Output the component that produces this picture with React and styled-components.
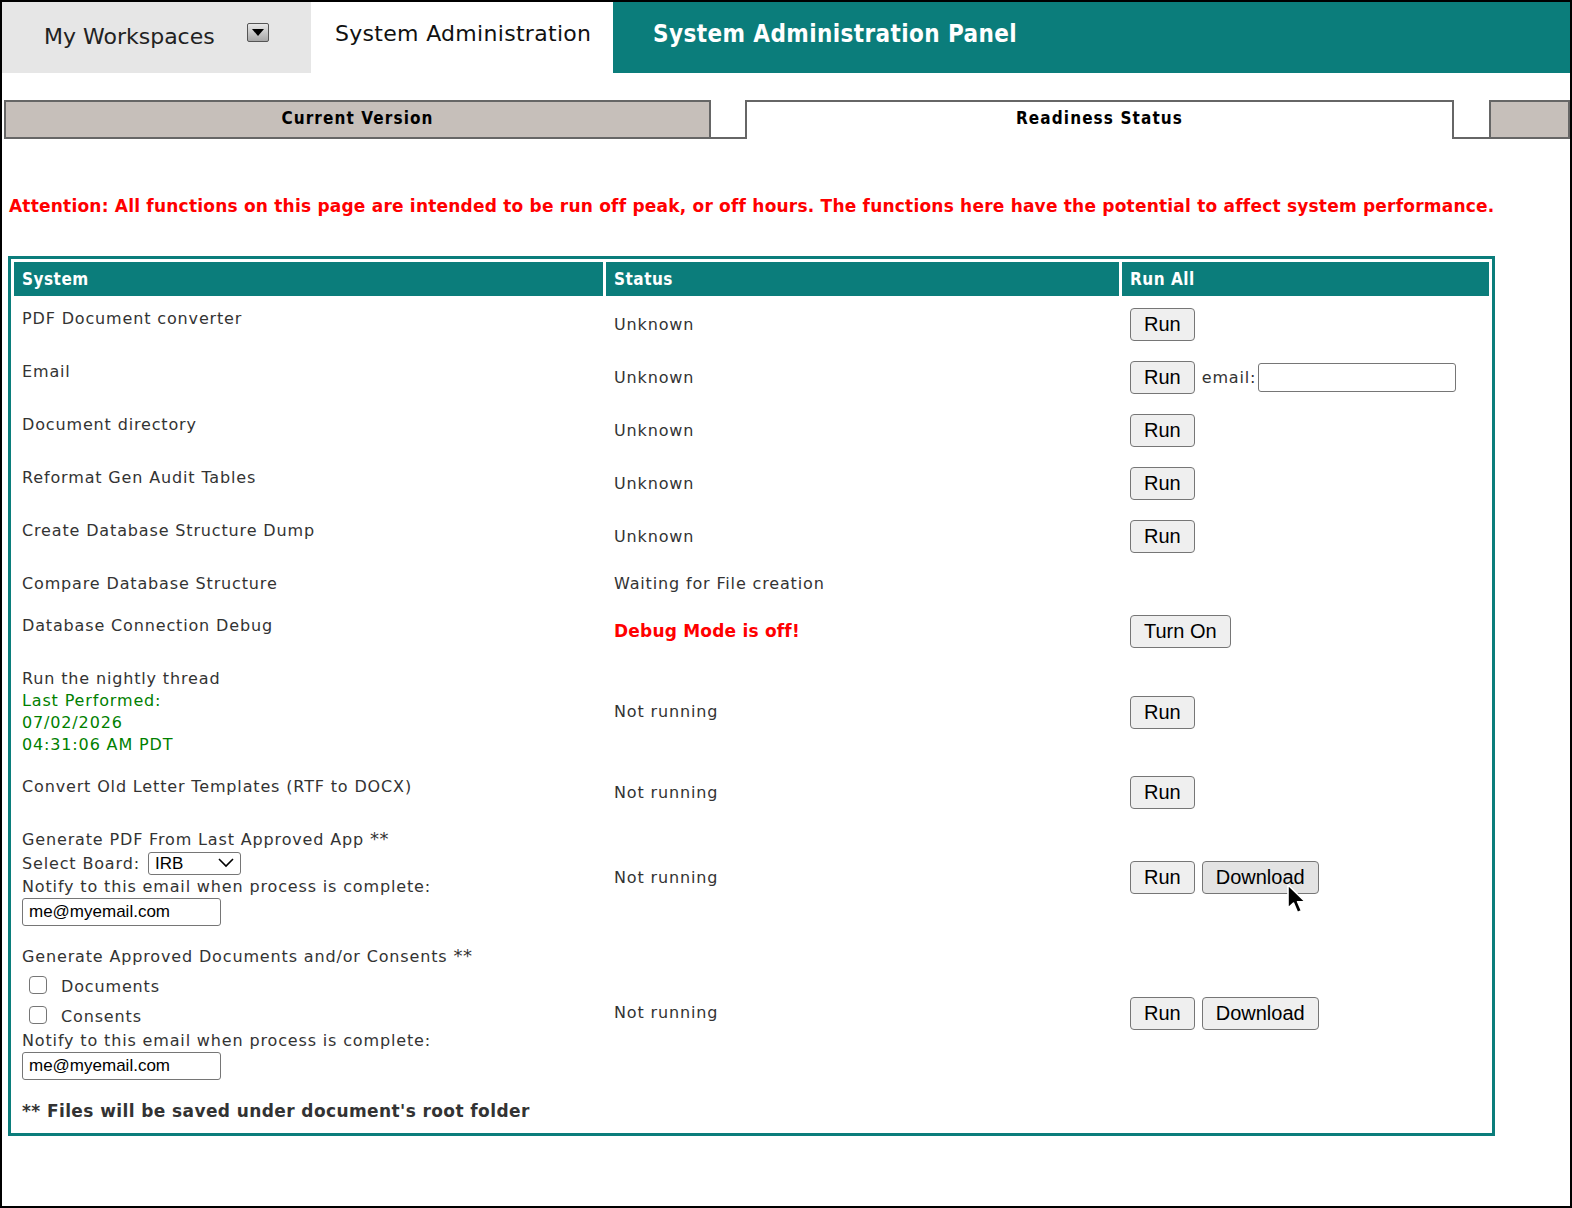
import styled, { createGlobalStyle } from "styled-components";

const TEAL = "#0b7d7b";
const BORDER = "#666";

const GlobalStyle = createGlobalStyle`
  html, body {
    margin: 0;
    padding: 0;
  }
  body {
    box-sizing: border-box;
    min-height: 1208px;
    border: 2px solid #000;
    background: #fff;
    color: #333;
    font-family: "DejaVu Sans", Verdana, sans-serif;
  }
`;

const Page = styled.div`
  display: flex;
  flex-direction: column;
`;

const TopBar = styled.div`
  display: flex;
  height: 71px;
`;

const WorkspaceTab = styled.div`
  width: 309px;
  background: #e6e6e6;
  display: flex;
  align-items: flex-start;
  padding: 22px 0 0 42px;
  box-sizing: border-box;
  gap: 32px;
  font-size: 22px;
  color: #222;
`;

const DropIcon = styled.span`
  display: inline-flex;
  align-items: center;
  justify-content: center;
  width: 22px;
  height: 19px;
  margin-top: -1px;
  border: 1px solid #555;
  border-radius: 2px;
  background: linear-gradient(#e8e8e8, #a8a8a8);
  box-sizing: border-box;
`;

const AdminTab = styled.div`
  width: 302px;
  background: #fff;
  padding: 19px 0 0 24px;
  box-sizing: border-box;
  font-size: 22px;
  letter-spacing: 0.3px;
  color: #111;
`;

const PanelTitle = styled.div`
  flex: 1;
  background: ${TEAL};
  color: #fff;
  padding: 18px 0 0 40px;
  font-family: "DejaVu Sans Condensed", "DejaVu Sans", sans-serif;
  font-weight: bold;
  font-size: 24px;
  letter-spacing: 0.4px;
`;

const SubTabs = styled.div`
  display: flex;
  height: 39px;
  margin-top: 27px;
  padding-left: 2px;
`;

const SubTab = styled.div`
  width: ${(p) => p.$width};
  flex: ${(p) => (p.$grow ? 1 : "none")};
  box-sizing: border-box;
  border: 2px solid ${BORDER};
  border-bottom: ${(p) => (p.$active ? "none" : `2px solid ${BORDER}`)};
  background: ${(p) => (p.$active ? "#fff" : "#c6bfba")};
  display: flex;
  align-items: center;
  justify-content: center;
  padding-bottom: ${(p) => (p.$active ? "5px" : "3px")};
  font-family: "DejaVu Sans Condensed", "DejaVu Sans", sans-serif;
  font-weight: bold;
  font-size: 17px;
  letter-spacing: 1.1px;
  color: #000;
`;

const TabGap = styled.div`
  width: ${(p) => p.$width};
  border-bottom: 2px solid ${BORDER};
  box-sizing: border-box;
`;

const Attention = styled.p`
  margin: 56px 0 0 7px;
  line-height: 22px;
  color: #f00;
  font-weight: bold;
  font-size: 17px;
  letter-spacing: 0.21px;
  white-space: nowrap;
`;

const Table = styled.table`
  margin: 39px 0 0 6px;
  width: 1487px;
  border: 3px solid ${TEAL};
  border-collapse: separate;
  border-spacing: 3px;
`;

const HeadCell = styled.th`
  width: ${(p) => p.$width};
  height: 34px;
  padding: 0 8px;
  box-sizing: border-box;
  background: ${TEAL};
  color: #fff;
  text-align: left;
  font-family: "DejaVu Sans Condensed", "DejaVu Sans", sans-serif;
  font-weight: bold;
  font-size: 17px;
  letter-spacing: 0.5px;
`;

const Cell = styled.td`
  padding: 9px 8px 8px;
  vertical-align: ${(p) => (p.$top ? "top" : "middle")};
  font-size: 16px;
  line-height: 22px;
  letter-spacing: 0.85px;
  color: #333;
`;

const Green = styled.div`
  color: #008000;
`;

const Stars = styled.span`
  font-size: 18px;
  line-height: 1;
  letter-spacing: 0.5px;
`;

const DebugOff = styled.span`
  color: #f00;
  font-weight: bold;
  font-size: 17px;
  letter-spacing: 0.2px;
`;

const Actions = styled.div`
  display: flex;
  align-items: center;
  gap: 7px;
`;

const Button = styled.button`
  position: relative;
  height: 33px;
  padding: 0 13px;
  border: 1px solid #767676;
  border-radius: 4px;
  background: ${(p) => (p.$hover ? "#e3e3e3" : "#efefef")};
  color: #000;
  font-family: "Liberation Sans", Arial, sans-serif;
  font-size: 20px;
  letter-spacing: normal;
`;

const Cursor = styled.svg`
  position: absolute;
  left: 83px;
  top: 22px;
  pointer-events: none;
`;

const EmailLabel = styled.label`
  display: flex;
  align-items: center;
  gap: 2px;
  font-size: 16px;
`;

const TextInput = styled.input`
  width: ${(p) => p.$width || "199px"};
  height: ${(p) => p.$height || "28px"};
  box-sizing: border-box;
  padding: 0 6px;
  border: 1px solid #767676;
  border-radius: 3px;
  background: #fff;
  color: #000;
  font-family: "Liberation Sans", Arial, sans-serif;
  font-size: 17px;
  letter-spacing: normal;
  display: block;
`;

const SelectLine = styled.div`
  display: flex;
  align-items: center;
  height: 25px;
`;

const SelectBox = styled.span`
  position: relative;
  display: inline-block;
  margin-left: 8px;
`;

const Select = styled.select`
  appearance: none;
  width: 93px;
  height: 23px;
  padding: 0 6px;
  border: 1px solid #767676;
  border-radius: 3px;
  background: #fff;
  color: #000;
  font-family: "Liberation Sans", Arial, sans-serif;
  font-size: 17px;
  letter-spacing: normal;
`;

const Chevron = styled.svg`
  position: absolute;
  right: 7px;
  top: 6px;
  pointer-events: none;
`;

const CheckList = styled.div`
  display: flex;
  flex-direction: column;
  gap: 4px;
  padding-top: 6px;
`;

const CheckRow = styled.label`
  display: flex;
  align-items: center;
  height: 26px;
  padding-left: 7px;
  gap: 14px;
`;

const Checkbox = styled.input`
  appearance: none;
  margin: -5px 0 0;
  width: 18px;
  height: 18px;
  border: 1px solid #767676;
  border-radius: 4px;
  background: #fff;
`;

const Footnote = styled.td`
  padding: 9px 8px 8px;
  font-weight: bold;
  font-size: 17px;
  line-height: 22px;
  letter-spacing: 0.4px;
  color: #333;
`;

const rows = [
  { name: "PDF Document converter", status: "Unknown" },
  { name: "Email", status: "Unknown", email: true },
  { name: "Document directory", status: "Unknown" },
  { name: "Reformat Gen Audit Tables", status: "Unknown" },
  { name: "Create Database Structure Dump", status: "Unknown" },
];

const ArrowCursor = () => (
  <Cursor width="22" height="32" viewBox="0 0 22 32">
    <path
      d="M2 1 L2 24 L7.5 19 L11.5 28.5 L15.5 26.8 L11.6 17.8 L19 17.5 Z"
      fill="#000"
      stroke="#fff"
      strokeWidth="1.6"
      strokeLinejoin="round"
    />
  </Cursor>
);

const RunDownload = ({ hover }) => (
  <Actions>
    <Button>Run</Button>
    <Button $hover={hover}>
      Download
      {hover && <ArrowCursor />}
    </Button>
  </Actions>
);

const App = () => (
  <>
    <GlobalStyle />
    <Page>
      <TopBar>
        <WorkspaceTab>
          My Workspaces
          <DropIcon>
            <svg width="12" height="8" viewBox="0 0 12 8">
              <path d="M0 0 H12 L6 7 Z" fill="#000" />
            </svg>
          </DropIcon>
        </WorkspaceTab>
        <AdminTab>System Administration</AdminTab>
        <PanelTitle>System Administration Panel</PanelTitle>
      </TopBar>

      <SubTabs>
        <SubTab $width="707px">Current Version</SubTab>
        <TabGap $width="34px" />
        <SubTab $width="709px" $active>
          Readiness Status
        </SubTab>
        <TabGap $width="35px" />
        <SubTab $grow />
      </SubTabs>

      <Attention>
        Attention: All functions on this page are intended to be run off peak, or off hours. The
        functions here have the potential to affect system performance.
      </Attention>

      <Table>
        <thead>
          <tr>
            <HeadCell $width="589px">System</HeadCell>
            <HeadCell $width="513px">Status</HeadCell>
            <HeadCell $width="367px">Run All</HeadCell>
          </tr>
        </thead>
        <tbody>
          {rows.map((r) => (
            <tr key={r.name}>
              <Cell $top>{r.name}</Cell>
              <Cell>{r.status}</Cell>
              <Cell>
                <Actions>
                  <Button>Run</Button>
                  {r.email && (
                    <EmailLabel>
                      email:
                      <TextInput $width="198px" $height="29px" />
                    </EmailLabel>
                  )}
                </Actions>
              </Cell>
            </tr>
          ))}
          <tr>
            <Cell $top>Compare Database Structure</Cell>
            <Cell $top>Waiting for File creation</Cell>
            <Cell />
          </tr>
          <tr>
            <Cell $top>Database Connection Debug</Cell>
            <Cell>
              <DebugOff>Debug Mode is off!</DebugOff>
            </Cell>
            <Cell>
              <Actions>
                <Button>Turn On</Button>
              </Actions>
            </Cell>
          </tr>
          <tr>
            <Cell $top>
              Run the nightly thread
              <Green>Last Performed:</Green>
              <Green>07/02/2026</Green>
              <Green>04:31:06 AM PDT</Green>
            </Cell>
            <Cell>Not running</Cell>
            <Cell>
              <Actions>
                <Button>Run</Button>
              </Actions>
            </Cell>
          </tr>
          <tr>
            <Cell $top>Convert Old Letter Templates (RTF to DOCX)</Cell>
            <Cell>Not running</Cell>
            <Cell>
              <Actions>
                <Button>Run</Button>
              </Actions>
            </Cell>
          </tr>
          <tr>
            <Cell $top>
              <div>
                Generate PDF From Last Approved App <Stars>**</Stars>
              </div>
              <SelectLine>
                Select Board:
                <SelectBox>
                  <Select defaultValue="IRB">
                    <option>IRB</option>
                  </Select>
                  <Chevron width="16" height="10" viewBox="0 0 16 10">
                    <path d="M1 1 L8 8 L15 1" fill="none" stroke="#000" strokeWidth="1.6" />
                  </Chevron>
                </SelectBox>
              </SelectLine>
              <div>Notify to this email when process is complete:</div>
              <TextInput defaultValue="me@myemail.com" />
            </Cell>
            <Cell>Not running</Cell>
            <Cell>
              <RunDownload hover />
            </Cell>
          </tr>
          <tr>
            <Cell $top>
              <div>
                Generate Approved Documents and/or Consents <Stars>**</Stars>
              </div>
              <CheckList>
                <CheckRow>
                  <Checkbox type="checkbox" />
                  Documents
                </CheckRow>
                <CheckRow>
                  <Checkbox type="checkbox" />
                  Consents
                </CheckRow>
              </CheckList>
              <div>Notify to this email when process is complete:</div>
              <TextInput defaultValue="me@myemail.com" />
            </Cell>
            <Cell>Not running</Cell>
            <Cell>
              <RunDownload />
            </Cell>
          </tr>
          <tr>
            <Footnote colSpan={3}>** Files will be saved under document's root folder</Footnote>
          </tr>
        </tbody>
      </Table>
    </Page>
  </>
);

export default App;
